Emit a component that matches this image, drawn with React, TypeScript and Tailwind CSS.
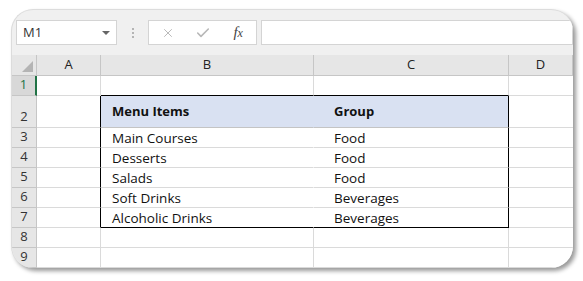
import { X, Check } from "lucide-react"

type Row = {
  n: number
  h: string
  b?: string
  c?: string
  head?: boolean
}

const rows: Row[] = [
  { n: 1, h: "h-[20px]" },
  { n: 2, h: "h-[32px]", b: "Menu Items", c: "Group", head: true },
  { n: 3, h: "h-[20px]", b: "Main Courses", c: "Food" },
  { n: 4, h: "h-[20px]", b: "Desserts", c: "Food" },
  { n: 5, h: "h-[20px]", b: "Salads", c: "Food" },
  { n: 6, h: "h-[20px]", b: "Soft Drinks", c: "Beverages" },
  { n: 7, h: "h-[20px]", b: "Alcoholic Drinks", c: "Beverages" },
  { n: 8, h: "h-[20px]" },
  { n: 9, h: "h-[20px]" },
]

const cellFont = "font-['Open_Sans',sans-serif] text-[13.5px] leading-none text-[#111]"
const headFont = "font-['Open_Sans',sans-serif] text-[13px] text-[#222]"

export default function App() {
  return (
    <div className="w-[583px] h-[281px] bg-white pt-[9px] pl-[11px]">
      <div className="w-[562px] h-[259px] rounded-[22px] overflow-hidden bg-[#f0f0f0] border-t border-l border-[#dcdcdc] shadow-[3px_3px_4px_rgba(0,0,0,0.4)]">
        {/* formula bar */}
        <div className="flex items-end h-[35px] pl-[4px]">
          <div className="flex items-center justify-between w-[101px] h-[25px] bg-white border border-[#d4d4d4] pl-[6px] pr-[6px]">
            <span className="font-['Open_Sans',sans-serif] text-[13px] text-[#333]">M1</span>
            <span className="w-0 h-0 border-l-[4px] border-r-[4px] border-t-[4px] border-l-transparent border-r-transparent border-t-[#666]" />
          </div>
          <div className="flex flex-col items-center justify-center gap-[2px] w-[31px] h-[25px]">
            <span className="w-[2px] h-[2px] bg-[#b4b4b4]" />
            <span className="w-[2px] h-[2px] bg-[#b4b4b4]" />
            <span className="w-[2px] h-[2px] bg-[#b4b4b4]" />
          </div>
          <div className="flex items-center w-[109px] h-[25px] bg-white border border-[#d4d4d4]">
            <div className="w-[38px] flex justify-center">
              <X size={14} strokeWidth={1.4} className="text-[#aaaaaa]" />
            </div>
            <div className="w-[34px] flex justify-center">
              <Check size={16} strokeWidth={2.4} className="text-[#b8b8b8]" />
            </div>
            <div className="w-[36px] flex justify-center">
              <span className="font-['Liberation_Serif',serif] italic text-[15px] text-[#444]">
                f<span className="text-[12px]">x</span>
              </span>
            </div>
          </div>
          <div className="ml-[4px] flex-1 h-[25px] bg-white border border-[#d4d4d4]" />
        </div>

        {/* sheet */}
        <div className="mt-[10px] grid grid-cols-[25px_64px_213px_195px_1fr]">
          {/* column headers */}
          <div className="h-[21px] bg-[#e6e6e6] border-r border-b border-[#c6c6c6] flex items-end justify-end pr-[3px] pb-[3px]">
            <span className="w-0 h-0 border-l-[11px] border-b-[11px] border-l-transparent border-b-[#b4b4b4]" />
          </div>
          {["A", "B", "C", "D"].map((l) => (
            <div
              key={l}
              className={`h-[21px] bg-[#e6e6e6] border-r border-b border-[#c6c6c6] flex items-center justify-center ${headFont}`}
            >
              {l}
            </div>
          ))}

          {rows.map((r) => {
            const inTable = r.n >= 2 && r.n <= 7
            const topEdge = r.n === 1
            const bottomEdge = r.n === 7
            return [
              <div
                key={`h${r.n}`}
                className={`${r.h} flex items-end justify-center pb-[1px] border-b border-[#c6c6c6] ${
                  topEdge
                    ? "bg-[#d8d8d8] border-r-2 border-r-[#217346] text-[#217346]"
                    : "bg-[#e6e6e6] border-r border-r-[#c6c6c6] text-[#333]"
                } ${headFont}`}
              >
                {r.n}
              </div>,
              <div
                key={`a${r.n}`}
                className={`${r.h} bg-white border-b border-[#dadada] border-r ${
                  inTable ? "border-r-black" : "border-r-[#dadada]"
                }`}
              />,
              <div
                key={`b${r.n}`}
                className={`${r.h} flex pl-[11px] border-r border-b ${
                  r.head ? "bg-[#d9e1f2] font-bold text-[13px] items-center" : "bg-white items-end pb-[2px]"
                } ${inTable ? "border-r-transparent" : "border-r-[#dadada]"} ${
                  topEdge || bottomEdge ? "border-b-black" : r.head ? "border-b-[#c4c4c4]" : "border-b-[#dadada]"
                } ${cellFont}`}
              >
                {r.b}
              </div>,
              <div
                key={`c${r.n}`}
                className={`${r.h} flex pl-[20px] border-r border-b ${
                  r.head ? "bg-[#d9e1f2] font-bold text-[13px] items-center" : "bg-white items-end pb-[2px]"
                } ${inTable ? "border-r-black" : "border-r-[#dadada]"} ${
                  topEdge || bottomEdge ? "border-b-black" : r.head ? "border-b-[#c4c4c4]" : "border-b-[#dadada]"
                } ${cellFont}`}
              >
                {r.c}
              </div>,
              <div key={`d${r.n}`} className={`${r.h} bg-white border-b border-[#dadada]`} />,
            ]
          })}
        </div>
      </div>
    </div>
  )
}
